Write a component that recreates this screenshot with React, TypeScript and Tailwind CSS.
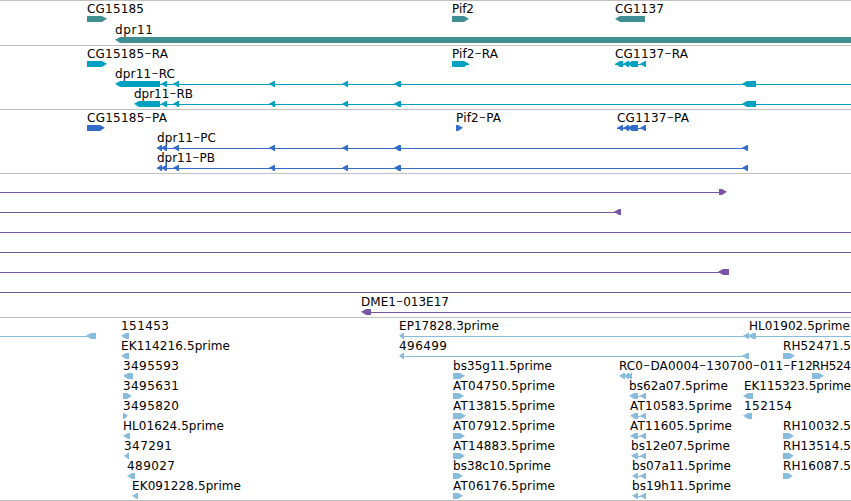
type Dir = 'l' | 'r';
type Block = [number, number, Dir];
type Label = [string, number, number];
interface RowData {
  labels?: Label[];
  line?: [number, number][];
  blocks?: Block[];
}
interface Track {
  name: string;
  color: string;
  height: string;
  rowHeight: string;
  rows: RowData[];
}

const l = (a: number, b: number): Block => [a, b, 'l'];
const r = (a: number, b: number): Block => [a, b, 'r'];

const introns = [l(161, 167), l(173, 179), l(269, 275), l(342, 348), l(394, 401)];

const tracks: Track[] = [
  {
    name: 'Genes',
    color: 'text-[#408f93]',
    height: 'h-[45px]',
    rowHeight: 'h-[21px]',
    rows: [
      {
        labels: [['CG15185', 87, 57], ['Pif2', 452, 22], ['CG1137', 615, 49]],
        blocks: [r(87, 107), r(452, 469), l(615, 645)],
      },
      { labels: [['dpr11', 115, 38]], blocks: [l(115, 856)] },
    ],
  },
  {
    name: 'Transcripts',
    color: 'text-[#00a0c0]',
    height: 'h-16',
    rowHeight: 'h-5',
    rows: [
      {
        labels: [['CG15185-RA', 87, 81], ['Pif2-RA', 452, 46], ['CG1137-RA', 615, 73]],
        line: [[452, 469], [615, 646]],
        blocks: [r(87, 107), r(452, 456), r(454, 469), l(615, 623), l(623, 629), l(627, 638), l(640, 646)],
      },
      {
        labels: [['dpr11-RC', 115, 60]],
        line: [[160, 851]],
        blocks: [l(115, 160), ...introns, l(742, 756)],
      },
      {
        labels: [['dpr11-RB', 134, 59]],
        line: [[160, 851]],
        blocks: [l(134, 160), ...introns, l(742, 756)],
      },
    ],
  },
  {
    name: 'Proteins',
    color: 'text-[#336dcc]',
    height: 'h-16',
    rowHeight: 'h-5',
    rows: [
      {
        labels: [['CG15185-PA', 87, 80], ['Pif2-PA', 456, 45], ['CG1137-PA', 617, 72]],
        line: [[617, 646]],
        blocks: [r(87, 105), r(456, 463), l(617, 623), l(623, 629), l(627, 638), l(640, 646)],
      },
      {
        labels: [['dpr11-PC', 157, 59]],
        line: [[157, 748]],
        blocks: [l(157, 162), ...introns, l(742, 748)],
      },
      {
        labels: [['dpr11-PB', 157, 58]],
        line: [[157, 748]],
        blocks: [l(157, 162), ...introns, l(742, 748)],
      },
    ],
  },
  {
    name: 'BACs',
    color: 'text-[#7755a9]',
    height: 'h-36',
    rowHeight: 'h-5',
    rows: [
      { line: [[0, 720]], blocks: [r(719, 727)] },
      { line: [[0, 618]], blocks: [l(614, 621)] },
      { line: [[0, 851]] },
      { line: [[0, 851]] },
      { line: [[0, 720]], blocks: [l(718, 729)] },
      { line: [[0, 851]] },
      { labels: [['DME1-013E17', 361, 88]], line: [[366, 851]], blocks: [l(361, 371)] },
    ],
  },
  {
    name: 'ESTs',
    color: 'text-[#88bcdd]',
    height: 'h-[183px]',
    rowHeight: 'h-5',
    rows: [
      {
        labels: [['151453', 121, 48], ['EP17828.3prime', 399, 100], ['HL01902.5prime', 749, 101]],
        line: [[0, 90], [401, 851]],
        blocks: [l(86, 96), l(121, 129), l(399, 404), l(743, 749), l(748, 756)],
      },
      {
        labels: [['EK114216.5prime', 121, 109], ['496499', 399, 48], ['RH52471.5', 783, 68]],
        line: [[401, 749]],
        blocks: [l(121, 129), l(399, 404), l(742, 749), r(783, 795)],
      },
      {
        labels: [['3495593', 123, 56], ['bs35g11.5prime', 453, 99], ['RC0-DA0004-130700-011-F12', 619, 194], ['RH524', 812, 39]],
        blocks: [l(123, 133), r(453, 465), l(619, 625), l(624, 629), l(627, 632), r(812, 824)],
      },
      {
        labels: [['3495631', 123, 56], ['AT04750.5prime', 453, 102], ['bs62a07.5prime', 629, 99], ['EK115323.5prime', 744, 107]],
        line: [[633, 645]],
        blocks: [r(123, 132), r(453, 464), l(629, 638), l(640, 646), l(743, 753)],
      },
      {
        labels: [['3495820', 123, 56], ['AT13815.5prime', 453, 102], ['AT10583.5prime', 630, 102], ['152154', 744, 48]],
        line: [[634, 645]],
        blocks: [r(123, 128), r(453, 466), l(630, 638), l(640, 646), l(743, 752)],
      },
      {
        labels: [['HL01624.5prime', 123, 101], ['AT07912.5prime', 453, 102], ['AT11605.5prime', 630, 102], ['RH10032.5', 783, 68]],
        line: [[634, 645]],
        blocks: [l(123, 130), r(453, 465), l(630, 638), l(640, 646), r(783, 794)],
      },
      {
        labels: [['347291', 124, 48], ['AT14883.5prime', 453, 102], ['bs12e07.5prime', 631, 99], ['RH13514.5', 783, 68]],
        line: [[635, 645]],
        blocks: [l(124, 129), r(453, 465), l(631, 638), l(640, 646), r(783, 794)],
      },
      {
        labels: [['489027', 127, 48], ['bs38c10.5prime', 453, 98], ['bs07a11.5prime', 632, 99], ['RH16087.5', 783, 68]],
        line: [[635, 645]],
        blocks: [l(127, 135), r(453, 463), l(632, 638), l(640, 646), r(783, 793)],
      },
      {
        labels: [['EK091228.5prime', 132, 109], ['AT06176.5prime', 453, 102], ['bs19h11.5prime', 632, 99]],
        line: [[635, 645]],
        blocks: [l(132, 138), r(453, 463), l(632, 638), l(640, 646)],
      },
    ],
  },
];

/** Oriented feature: a six pixel bar whose leading end tapers to a point. */
function Feature({ block: [a, b, dir] }: { block: Block }) {
  const head = Math.min(6, b - a);
  const points =
    dir === 'l'
      ? `${a},17.8 ${a + head - 1},15 ${b},15 ${b},21 ${a + head - 1},21`
      : `${b},17.8 ${b - head + 1},15 ${a},15 ${a},21 ${b - head + 1},21`;
  return <polygon points={points} fill="currentColor" />;
}

/** Hyphens are set larger and thinner so that they read as long dashes. */
function LabelText({ label: [text, x, w] }: { label: Label }) {
  return (
    <text x={x} y="12" textLength={w} className="fill-black">
      {text.split(/(-)/).map((part, i) =>
        part === '-' ? (
          <tspan key={i} dy="1" className="text-[20px] font-extralight">
            {part}
          </tspan>
        ) : (
          <tspan key={i} dy={i > 0 ? -1 : 0}>
            {part}
          </tspan>
        ),
      )}
    </text>
  );
}

function Row({ row, height }: { row: RowData; height: string }) {
  return (
    <div className={`w-full shrink-0 ${height}`}>
      <svg width="851" height="22" className="block overflow-visible">
        {row.line?.map(([a, b]) => (
          <rect key={a} x={a} y="18" width={b - a} height="1" fill="currentColor" />
        ))}
        {row.blocks?.map((b) => (
          <Feature key={b[0]} block={b} />
        ))}
        {row.labels?.map((label) => (
          <LabelText key={label[1]} label={label} />
        ))}
      </svg>
    </div>
  );
}

export default function App() {
  return (
    <main className="flex h-[501px] w-[851px] flex-col overflow-hidden border-b border-[#c0c0c0] bg-white font-['DejaVu_Sans','Liberation_Sans',sans-serif] text-[12px]">
      {tracks.map((t) => (
        <section key={t.name} className={`flex shrink-0 flex-col border-t border-[#c0c0c0] ${t.height} ${t.color}`}>
          {t.rows.map((row, i) => (
            <Row key={i} row={row} height={t.rowHeight} />
          ))}
        </section>
      ))}
    </main>
  );
}
